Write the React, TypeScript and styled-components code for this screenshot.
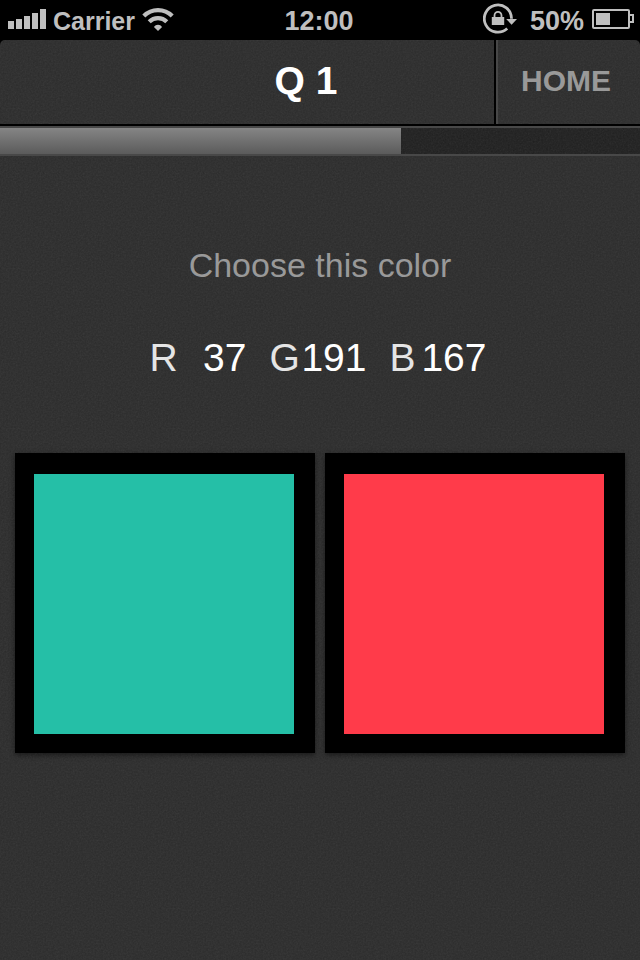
import React from "react";
import styled, { createGlobalStyle } from "styled-components";

const grain = (opacity: number) =>
  `url("data:image/svg+xml,${encodeURIComponent(
    `<svg xmlns='http://www.w3.org/2000/svg' width='160' height='160'><filter id='n' x='0' y='0' width='100%' height='100%'><feTurbulence type='fractalNoise' baseFrequency='0.6' numOctaves='2' stitchTiles='stitch'/><feColorMatrix type='saturate' values='0'/></filter><rect width='160' height='160' filter='url(#n)' opacity='${opacity}'/></svg>`
  )}")`;

const GlobalStyle = createGlobalStyle`
  *, *::before, *::after { box-sizing: border-box; }
  body {
    margin: 0;
    background: #000;
    font-family: "Liberation Sans", Arial, Helvetica, sans-serif;
  }
  button { font: inherit; border: 0; cursor: pointer; }
`;

const Screen = styled.div`
  display: flex;
  flex-direction: column;
  min-height: 100vh;
`;

const StatusBar = styled.header`
  display: grid;
  grid-template-columns: 1fr auto 1fr;
  align-items: center;
  height: 40px;
  padding: 0 6px 2px 8px;
  color: #bfbfbf;
  font-weight: bold;
`;

const StatusGroup = styled.div<{ $end?: boolean }>`
  display: flex;
  align-items: center;
  justify-content: ${(p) => (p.$end ? "flex-end" : "flex-start")};
  gap: ${(p) => (p.$end ? "8px" : "7px")};
`;

const StatusText = styled.span`
  padding-top: 4px;
  font-size: 27px;
  line-height: 34px;
`;

const Carrier = styled(StatusText)`
  font-size: 25px;
`;

const Clock = styled(StatusText)`
  padding-right: 4px;
`;

const BatteryLevel = styled(StatusText)`
  padding-left: 4px;
`;

const Body = styled.div`
  flex: 1;
  border-radius: 5px 5px 0 0;
  overflow: hidden;
  background: ${grain(0.1)} #2a2a2a;
`;

const NavBar = styled.nav`
  display: flex;
  height: 86px;
  border-bottom: 2px solid #000;
`;

const Title = styled.h1`
  flex: 1;
  margin: 0;
  padding-left: 118px;
  color: #fff;
  font-size: 39px;
  line-height: 82px;
  text-align: center;
`;

const HomeButton = styled.button`
  width: 146px;
  padding: 0 4px 2px 0;
  border-left: 2px solid #000;
  box-shadow: inset 2px 0 #474747;
  background: transparent;
  color: #999;
  font-size: 30px;
  font-weight: bold;
  line-height: 82px;
`;

const Track = styled.div`
  height: 30px;
  border: solid #484848;
  border-width: 2px 0;
  background: ${grain(0.1)} #1e1e1e;
`;

const Fill = styled.div`
  height: 100%;
  background: linear-gradient(#858585, #5b5b5b);
`;

const Question = styled.main`
  display: flex;
  flex-direction: column;
  align-items: center;
  padding: 89px 15px 0;
`;

const Prompt = styled.p`
  margin: 0;
  color: #999;
  font-size: 34px;
  line-height: 40px;
`;

const Channels = styled.dl`
  display: grid;
  grid-template-columns: repeat(3, 97px);
  gap: 23px;
  margin: 49px 0 72px;
  padding-right: 4px;
  font-size: 39px;
  line-height: 47px;
`;

const Channel = styled.div`
  display: flex;
  justify-content: space-between;
`;

const ChannelName = styled.dt`
  color: #e5e5e5;
`;

const ChannelValue = styled.dd`
  margin: 0;
  color: #fff;
`;

const Choices = styled.div`
  display: grid;
  grid-template-columns: 1fr 1fr;
  gap: 10px;
  width: 100%;
`;

const Choice = styled.button`
  display: flex;
  aspect-ratio: 1;
  padding: 21px 21px 19px 19px;
  background: #000;
  box-shadow: 0 2px 5px rgba(0, 0, 0, 0.5);
`;

const Swatch = styled.span<{ $color: string }>`
  flex: 1;
  align-self: stretch;
  background: ${(p) => p.$color};
`;

const SignalIcon = () => (
  <svg width="38" height="20" viewBox="0 0 38 20" fill="#bfbfbf" aria-label="Signal">
    <path d="M0 12h6v8H0zM8 10h6v10H8zM16 7h6v13h-6zM24 4h6v16h-6zM32 0h6v20h-6z" />
  </svg>
);

const WifiIcon = () => (
  <svg width="32" height="24" viewBox="0 0 32 24" fill="none" stroke="#bfbfbf" strokeWidth="4.2" aria-label="Wi-Fi">
    <path d="M1.8 9a20 20 0 0 1 28.4 0M7.2 14.8a12.4 12.4 0 0 1 17.6 0" />
    <path d="M11.9 20a5 5 0 0 1 8.2 0L16 24z" fill="#bfbfbf" stroke="none" />
  </svg>
);

const RotationLockIcon = () => (
  <svg width="35" height="32" viewBox="0 0 35 32" fill="none" stroke="#bfbfbf" aria-label="Rotation lock">
    <path d="M24.2 25.5A13.6 13.6 0 1 1 28.5 15.8" strokeWidth="2.8" />
    <path d="M23.2 16h10.8L28.6 21.7z" fill="#bfbfbf" stroke="none" />
    <path d="M8.8 14h12.4v8H8.8z" fill="#bfbfbf" stroke="none" />
    <path d="M11.5 14.8v-2.4a3.5 3.5 0 0 1 7 0v2.4" strokeWidth="1.8" />
  </svg>
);

const BatteryIcon = () => (
  <svg width="42" height="20" viewBox="0 0 42 20" fill="none" stroke="#bfbfbf" strokeWidth="2" aria-label="Battery">
    <rect x="1" y="1" width="36" height="18" rx="1" />
    <path d="M38 6h3v7h-3" />
    <path d="M4 4h14v12H4z" fill="#bfbfbf" stroke="none" />
  </svg>
);

const channels = [
  { name: "R", value: 37 },
  { name: "G", value: 191 },
  { name: "B", value: 167 },
];

const choices = [
  { label: "Teal", color: "#25bfa7" },
  { label: "Red", color: "#ff3b4a" },
];

const progress = 62.7;

export default function App() {
  return (
    <Screen>
      <GlobalStyle />
      <StatusBar>
        <StatusGroup>
          <SignalIcon />
          <Carrier>Carrier</Carrier>
          <WifiIcon />
        </StatusGroup>
        <Clock>12:00</Clock>
        <StatusGroup $end>
          <RotationLockIcon />
          <BatteryLevel>50%</BatteryLevel>
          <BatteryIcon />
        </StatusGroup>
      </StatusBar>
      <Body>
        <NavBar>
          <Title>Q 1</Title>
          <HomeButton type="button">HOME</HomeButton>
        </NavBar>
        <Track role="progressbar" aria-label="Progress" aria-valuenow={progress}>
          <Fill style={{ width: `${progress}%` }} />
        </Track>
        <Question>
          <Prompt>Choose this color</Prompt>
          <Channels>
            {channels.map((c) => (
              <Channel key={c.name}>
                <ChannelName>{c.name}</ChannelName>
                <ChannelValue>{c.value}</ChannelValue>
              </Channel>
            ))}
          </Channels>
          <Choices>
            {choices.map((c) => (
              <Choice key={c.label} type="button" aria-label={c.label}>
                <Swatch $color={c.color} />
              </Choice>
            ))}
          </Choices>
        </Question>
      </Body>
    </Screen>
  );
}
